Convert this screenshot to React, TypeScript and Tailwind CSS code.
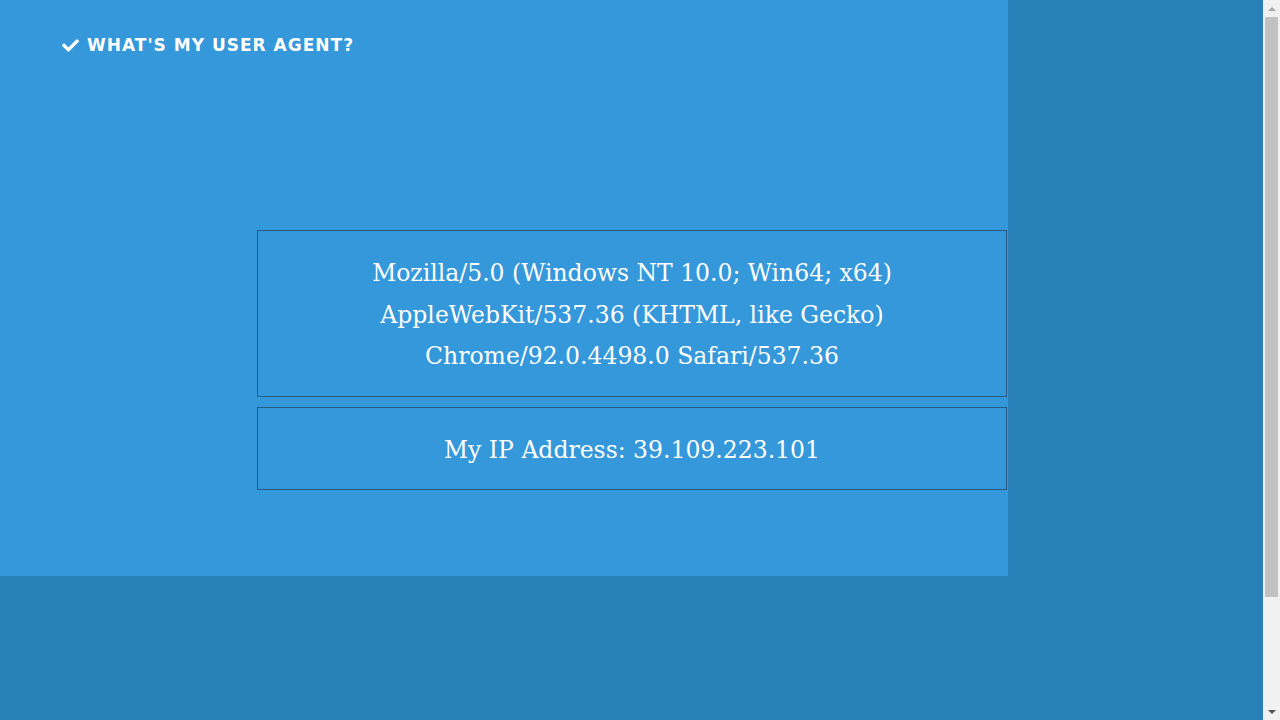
import React from 'react';

function CheckIcon() {
  return (
    <svg viewBox="0 0 512 512" className="w-[17px] h-[17px] fill-white">
      <path d="M173.9 439.4l-166.4-166.4c-10-10-10-26.2 0-36.2l36.2-36.2c10-10 26.2-10 36.2 0L192 312.7 432.1 72.6c10-10 26.2-10 36.2 0l36.2 36.2c10 10 10 26.2 0 36.2L210.1 439.4c-10 10-26.2 10-36.2 0z" />
    </svg>
  );
}

// Browser-style vertical scrollbar as seen in the screenshot
function Scrollbar() {
  return (
    <div className="w-[17px] h-[720px] bg-[#f1f1f1] flex flex-col items-center">
      <div className="h-[17px] w-full flex items-center justify-center">
        <svg viewBox="0 0 8 4" className="w-[8px] h-[4px] fill-[#a3a3a3]">
          <polygon points="4,0 8,4 0,4" />
        </svg>
      </div>
      <div className="w-[13px] h-[580px] bg-[#c1c1c1]" />
      <div className="flex-1" />
      <div className="h-[17px] w-full flex items-center justify-center">
        <svg viewBox="0 0 8 4" className="w-[8px] h-[4px] fill-[#505050]">
          <polygon points="0,0 8,0 4,4" />
        </svg>
      </div>
    </div>
  );
}

export default function App() {
  const ua = [
    'Mozilla/5.0 (Windows NT 10.0; Win64; x64)',
    'AppleWebKit/537.36 (KHTML, like Gecko)',
    'Chrome/92.0.4498.0 Safari/537.36',
  ];

  return (
    <div className="flex h-[720px] overflow-hidden">
      <main className="flex-1 bg-[#2980b9]">
        <div className="w-[1008px] h-[576px] bg-[#3498db] flex flex-col">
          {/* Header */}
          <div className="pt-[36px] pl-[62px] flex items-center gap-[8px] h-[55px]">
            <CheckIcon />
            <span className="text-white font-bold text-[17px] tracking-[1px] font-['DejaVu_Sans',sans-serif]">
              WHAT&apos;S MY USER AGENT?
            </span>
          </div>

          {/* Result boxes */}
          <div className="mt-[175px] ml-[257px] w-[750px] flex flex-col gap-[10px] font-['DejaVu_Serif',serif] text-white text-[23.5px] leading-[41.5px] text-center">
            <div className="border border-[#265a80] pt-[22px] pb-[18px]">
              {ua.map((line) => (
                <div key={line}>{line}</div>
              ))}
            </div>
            <div className="border border-[#265a80] pt-[22px] pb-[18px]">
              My IP Address: 39.109.223.101
            </div>
          </div>
        </div>
      </main>
      <Scrollbar />
    </div>
  );
}
